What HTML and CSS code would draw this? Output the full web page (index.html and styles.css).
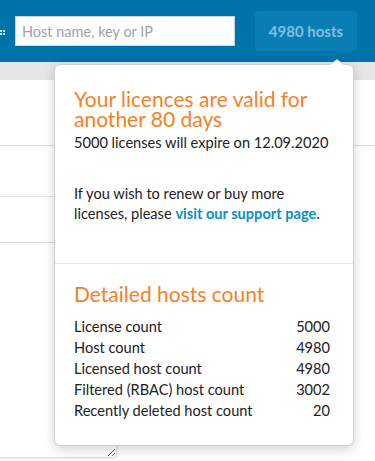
FILE: index.html
```html
<!DOCTYPE html>
<html lang="en">
<head>
    <meta charset="UTF-8">
    <meta name="viewport" content="width=device-width, initial-scale=1.0">
    <title>Hosts</title>
    <link rel="stylesheet" href="styles.css">
</head>
<body>
    <header class="topbar">
        <span class="grip"></span>
        <input type="text" class="search" placeholder="Host name, key or IP" aria-label="Search hosts">
        <button type="button" class="hosts-button">4980 hosts</button>
    </header>

    <div class="toolbar"></div>
    <div class="content">
        <div class="row row-first"></div>
        <div class="row row-second"></div>
        <div class="row row-third"></div>
        <div class="note">
            <textarea class="note-input" aria-label="Notes"></textarea>
        </div>
    </div>

    <div class="popover">
        <section class="popover-section">
            <h2>Your licences are valid for another 80 days</h2>
            <p>5000 licenses will expire on 12.09.2020</p>
            <p class="renew">If you wish to renew or buy more licenses, please <a href="#">visit our support page</a>.</p>
        </section>
        <section class="popover-section">
            <h2>Detailed hosts count</h2>
            <dl class="counts">
                <div><dt>License count</dt><dd>5000</dd></div>
                <div><dt>Host count</dt><dd>4980</dd></div>
                <div><dt>Licensed host count</dt><dd>4980</dd></div>
                <div><dt>Filtered (RBAC) host count</dt><dd>3002</dd></div>
                <div><dt>Recently deleted host count</dt><dd>20</dd></div>
            </dl>
        </section>
    </div>
</body>
</html>
```

FILE: styles.css
```css
* {
    margin: 0;
    padding: 0;
    box-sizing: border-box;
}

body {
    font-family: 'Lato', 'Open Sans', sans-serif;
    color: #222;
    width: 375px;
    height: 461px;
    overflow: hidden;
    position: relative;
    background: #ffffff;
}

.topbar {
    height: 62px;
    background: #0073a8;
    display: flex;
    align-items: center;
}

.grip {
    width: 5px;
    height: 6px;
    margin-top: 4px;
    background:
        radial-gradient(circle at 1px 1px, #d6e8f2 1px, transparent 1.3px) 0 0 / 3px 3px;
}

.search {
    margin-left: 10px;
    width: 220px;
    height: 30px;
    border: 1px solid #c9d3d9;
    padding: 0 6px;
    font-family: inherit;
    font-size: 14.5px;
    color: #222;
    background: #ffffff;
}

.search::placeholder {
    color: #a3a3a3;
}

.hosts-button {
    margin-left: 20px;
    width: 102px;
    height: 40px;
    border: none;
    border-radius: 3px;
    background: #0a7db5;
    color: #80bfe2;
    font-family: inherit;
    font-size: 15px;
    font-weight: 700;
}

.toolbar {
    height: 18px;
    background: #e6e6e6;
}

.row {
    border-bottom: 1px solid #dcdcdc;
}

.row-first {
    height: 66px;
}

.row-second {
    height: 51px;
    width: 200px;
    border-color: #e4e4e4;
}

.row-third {
    height: 46px;
    width: 200px;
    border-color: #e4e4e4;
}

.note {
    margin-top: -1px;
    margin-left: -20px;
    width: 136px;
}

.note-input {
    display: block;
    width: 137px;
    height: 216px;
    border: 1px solid #dcdcdc;
    border-radius: 4px;
    box-shadow: 0 1px 3px rgba(0, 0, 0, 0.08);
}

/* license popover, hangs off the hosts button */
.popover {
    position: absolute;
    left: 54px;
    top: 64px;
    width: 300px;
    height: 382px;
    background: #ffffff;
    border: 1px solid #cfcfcf;
    border-radius: 6px;
    box-shadow: 0 3px 12px rgba(0, 0, 0, 0.18);
}

.popover::before,
.popover::after {
    content: "";
    position: absolute;
    left: 274px;
    border: 8px solid transparent;
    border-top: none;
}

.popover::before {
    top: -6px;
    border-bottom: 6px solid #cfcfcf;
}

.popover::after {
    top: -5px;
    border-bottom: 6px solid #ffffff;
}

.popover-section {
    padding: 24px 19px 0;
}

.popover-section + .popover-section {
    border-top: 1px solid #e8e8e8;
    padding-top: 20px;
}

.popover-section:first-child {
    height: 198px;
}

.popover-section h2 {
    font-size: 21px;
    font-weight: 400;
    line-height: 20px;
    color: #f5821f;
    margin-bottom: 12px;
}

.popover-section:first-child h2 {
    margin-bottom: 4px;
}

.popover-section p {
    font-size: 14.6px;
    line-height: 20px;
    padding-right: 4px;
}

.renew {
    margin-top: 31px;
}

.renew a {
    color: #0b8ec5;
    font-weight: 700;
    text-decoration: none;
}

.counts div {
    display: flex;
    justify-content: space-between;
    padding-right: 4px;
    font-size: 14.6px;
    line-height: 21px;
}
```
